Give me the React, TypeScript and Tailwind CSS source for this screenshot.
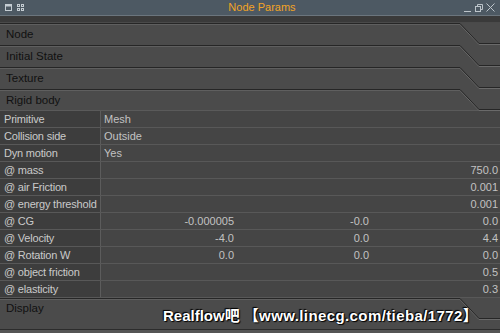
import React from "react";

const font = { fontFamily: '"Liberation Sans", Arial, "Noto Sans CJK SC", sans-serif' };

type Row = { label: string; text?: string; vals?: string[] };

const rows: Row[] = [
  { label: "Primitive", text: "Mesh" },
  { label: "Collision side", text: "Outside" },
  { label: "Dyn motion", text: "Yes" },
  { label: "@ mass", vals: ["", "", "750.0"] },
  { label: "@ air Friction", vals: ["", "", "0.001"] },
  { label: "@ energy threshold", vals: ["", "", "0.001"] },
  { label: "@ CG", vals: ["-0.000005", "-0.0", "0.0"] },
  { label: "@ Velocity", vals: ["-4.0", "0.0", "4.4"] },
  { label: "@ Rotation W", vals: ["0.0", "0.0", "0.0"] },
  { label: "@ object friction", vals: ["", "", "0.5"] },
  { label: "@ elasticity", vals: ["", "", "0.3"] },
];

function Notch() {
  return (
    <svg width="40" height="22" className="absolute right-0 top-0" viewBox="0 0 40 22">
      <polyline points="0,1.5 19,21.5 40,21.5" fill="none" stroke="#6a6a6a" strokeWidth="1" />
      <polyline points="0,0.5 19,20.5 40,20.5" fill="none" stroke="#262626" strokeWidth="1" />
    </svg>
  );
}

function Tab({ title, h = "h-[22px]" }: { title: string; h?: string }) {
  return (
    <div className={`relative ${h} bg-[#4b4b4b]`}>
      <div className="absolute left-0 right-[40px] top-0 h-px bg-[#262626]" />
      <div className="absolute left-0 right-[40px] top-px h-px bg-[#5f5f5f]" />
      <Notch />
      <div className="pl-[6px] pt-[5px] text-[11.5px] leading-[13px] text-[#111]">{title}</div>
    </div>
  );
}

export default function App() {
  return (
    <div className="h-[333px] w-[500px] overflow-hidden bg-[#4b4b4b] select-none" style={font}>
      {/* title bar */}
      <div className="flex h-[15px] items-center bg-[#4d5963] px-[5px]">
        <div className="flex items-center gap-[5px]">
          <svg width="7" height="7" viewBox="0 0 7 7">
            <rect x="0.5" y="0.5" width="6" height="6" fill="none" stroke="#c4ccd2" />
            <rect x="0.5" y="0.5" width="6" height="2" fill="#c4ccd2" />
          </svg>
          <svg width="7" height="7" viewBox="0 0 7 7">
            <rect x="0.5" y="0.5" width="2" height="2" fill="none" stroke="#c4ccd2" />
            <rect x="4.5" y="0.5" width="2" height="2" fill="none" stroke="#c4ccd2" />
            <rect x="0.5" y="4.5" width="2" height="2" fill="none" stroke="#c4ccd2" />
            <rect x="4.5" y="4.5" width="2" height="2" fill="none" stroke="#c4ccd2" />
          </svg>
        </div>
        <div className="flex-1 pl-[36px] text-center text-[11px] leading-[15px] text-[#f2a425]">Node Params</div>
        <div className="flex items-center gap-[3px]">
          <svg width="8" height="8" viewBox="0 0 8 8">
            <line x1="0" y1="7.5" x2="7" y2="7.5" stroke="#bcc4ca" />
          </svg>
          <svg width="8" height="8" viewBox="0 0 8 8">
            <rect x="0.5" y="2.5" width="5" height="5" fill="none" stroke="#bcc4ca" />
            <polyline points="2.5,2.5 2.5,0.5 7.5,0.5 7.5,5.5 5.5,5.5" fill="none" stroke="#bcc4ca" />
          </svg>
          <svg width="9" height="9" viewBox="0 0 9 9">
            <line x1="0.5" y1="0.5" x2="8.5" y2="8.5" stroke="#bcc4ca" />
            <line x1="8.5" y1="0.5" x2="0.5" y2="8.5" stroke="#bcc4ca" />
          </svg>
        </div>
      </div>
      <div className="h-px bg-[#6b757d]" />
      <div className="h-[6px] bg-[#3a3a3a]" />
      <div className="h-px bg-[#4a4a4a]" />

      <Tab title="Node" />
      <Tab title="Initial State" />
      <Tab title="Texture" />
      <Tab title="Rigid body" h="h-[21px]" />

      {/* parameter rows */}
      <div className="border-t border-[#5a5a5a]">
        {rows.map((r) => (
          <div key={r.label} className="flex h-[17px] border-b border-[#585858]">
            <div className="w-[101px] overflow-hidden whitespace-nowrap border-r border-[#5c5c5c] bg-[#3d3d3d] pl-[4px] text-[11px] leading-[16px] tracking-[-0.2px] text-[#cacaca]">
              {r.label}
            </div>
            {r.text !== undefined ? (
              <div className="flex-1 bg-[#454545] pl-[3px] text-[11px] leading-[16px] text-[#c2c2c2]">{r.text}</div>
            ) : (
              <div className="flex flex-1 bg-[#454545] text-[11px] leading-[16px] text-[#c2c2c2]">
                <div className="w-[135px] pr-[2px] text-right">{r.vals![0]}</div>
                <div className="w-[135px] pr-[2px] text-right">{r.vals![1]}</div>
                <div className="flex-1 pr-[2px] text-right">{r.vals![2]}</div>
              </div>
            )}
          </div>
        ))}
      </div>

      <div className="relative h-[31px] bg-[#4b4b4b]">
        <div className="absolute left-0 right-[40px] top-0 h-px bg-[#262626]" />
        <div className="absolute left-0 right-[40px] top-px h-px bg-[#5f5f5f]" />
        <Notch />
        <div className="pl-[6px] pt-[4px] text-[11.5px] leading-[13px] text-[#111]">Display</div>
        <div
          className="absolute left-[163px] top-[10px] whitespace-nowrap text-[15px] font-bold leading-[16px] text-white"
          style={{ textShadow: "0 0 1px #000, 1px 1px 1px #000, -1px -1px 1px #000" }}
        >
          Realflow吧<span className="ml-[4px] tracking-[0.4px]">【www.linecg.com/tieba/1772】</span>
        </div>
      </div>
      <div className="h-px bg-[#2c2c2c]" />
      <div className="h-[4px] bg-[#555]" />
    </div>
  );
}
